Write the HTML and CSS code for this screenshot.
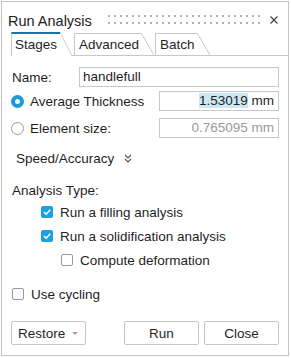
FILE: index.html
```html
<!DOCTYPE html>
<html lang="en">
<head>
    <meta charset="UTF-8">
    <meta name="viewport" content="width=device-width, initial-scale=1.0">
    <title>Run Analysis</title>
    <link rel="stylesheet" href="styles.css">
</head>
<body>
    <div class="dialog">
        <div class="titlebar">
            <span class="title">Run Analysis</span>
            <span class="grip"></span>
            <svg class="close" width="8" height="8" viewBox="0 0 8 8">
                <path d="M0.5 0.5 L7.5 7.5 M7.5 0.5 L0.5 7.5" stroke="#444" stroke-width="1.2" fill="none"/>
            </svg>
        </div>

        <div class="tabs">
            <div class="tab active">Stages</div>
            <div class="tab">Advanced</div>
            <div class="tab">Batch</div>
        </div>

        <div class="panel">
            <div class="row">
                <span>Name:</span>
                <div class="field name-field">handlefull</div>
            </div>

            <div class="row row-avg">
                <span class="radio on"></span>
                <span>Average Thickness</span>
                <div class="field value-field"><span class="sel">1.53019</span> mm</div>
            </div>

            <div class="row row-elem">
                <span class="radio"></span>
                <span>Element size:</span>
                <div class="field value-field muted">0.765095 mm</div>
            </div>

            <div class="row row-speed">
                <span>Speed/Accuracy</span>
                <svg class="chevron" width="8" height="9" viewBox="0 0 8 9">
                    <path d="M1 1 L4 4 L7 1 M1 5 L4 8 L7 5" stroke="#555" stroke-width="1.2" fill="none"/>
                </svg>
            </div>

            <div class="row row-heading">
                <span>Analysis Type:</span>
            </div>

            <div class="row row-first indent-1">
                <span class="check on">
                    <svg width="10" height="10" viewBox="0 0 10 10">
                        <path d="M2 5 L4.2 7.2 L8.2 2.8" stroke="#fff" stroke-width="1.6" fill="none"/>
                    </svg>
                </span>
                <span>Run a filling analysis</span>
            </div>

            <div class="row row-next indent-1">
                <span class="check on">
                    <svg width="10" height="10" viewBox="0 0 10 10">
                        <path d="M2 5 L4.2 7.2 L8.2 2.8" stroke="#fff" stroke-width="1.6" fill="none"/>
                    </svg>
                </span>
                <span>Run a solidification analysis</span>
            </div>

            <div class="row row-next indent-2">
                <span class="check"></span>
                <span>Compute deformation</span>
            </div>

            <div class="row row-cycling">
                <span class="check"></span>
                <span>Use cycling</span>
            </div>

            <div class="actions">
                <button class="btn restore">Restore <span class="caret"></span></button>
                <button class="btn run">Run</button>
                <button class="btn">Close</button>
            </div>
        </div>
    </div>
</body>
</html>
```

FILE: styles.css
```css
body {
    margin: 0;
    font-family: "Liberation Sans", Arial, sans-serif;
    font-size: 13.5px;
    color: #1f1f1f;
    background-color: #fff;
}
.dialog {
    box-sizing: border-box;
    width: 288px;
    height: 355px;
    margin: 1px;
    border: 1px solid #c4c4c4;
    display: flex;
    flex-direction: column;
}
.titlebar {
    display: flex;
    align-items: flex-start;
    padding: 11px 10px 3px 6px;
}
.title {
    font-size: 14.5px;
    line-height: 16px;
    color: #222;
}
.grip {
    width: 152px;
    height: 9px;
    margin: 2px 10px 0 auto;
    background-color: #b0b0b0;
    background-image: linear-gradient(to right, transparent 2px, #fff 2px),
                      linear-gradient(to bottom, transparent 2px, #fff 2px);
    background-size: 6px 7px;
}
.close {
    margin-top: 3px;
}
.tabs {
    display: flex;
    align-items: flex-end;
    height: 23px;
    margin-left: 9px;
    border-bottom: 1px solid #c8c8c8;
}
.tab {
    position: relative;
    height: 21px;
    line-height: 21px;
    padding: 0 2px 0 4px;
    margin-right: 14px;
    border-top: 1px solid #c8c8c8;
    border-left: 1px solid #c8c8c8;
}
.tab::after {
    content: "";
    position: absolute;
    top: -1px;
    bottom: 0;
    left: 100%;
    width: 13px;
    background: linear-gradient(to top right, transparent calc(50% - 0.8px), #c8c8c8 50%, transparent calc(50% + 0.8px));
}
.tab.active {
    height: 22px;
    padding: 0 3px;
    margin-bottom: -1px;
    border-top: 2px solid #17789f;
    background-color: #fff;
}
.tab.active::after {
    top: -2px;
    width: 12px;
    background-color: #fff;
}
.panel {
    flex: 1;
    display: flex;
    flex-direction: column;
    padding: 11px 9px 10px 10px;
}
.row {
    display: flex;
    align-items: center;
    height: 20px;
}
.row-avg {
    margin-top: 4px;
}
.row-elem {
    margin-top: 7px;
}
.row-speed {
    margin-top: 10px;
    padding-left: 4px;
}
.row-heading {
    margin-top: 12px;
}
.row-first {
    margin-top: 2px;
}
.row-next {
    margin-top: 4px;
}
.row-cycling {
    margin-top: 14px;
}
.indent-1 {
    padding-left: 29px;
}
.indent-2 {
    padding-left: 49px;
}
.field {
    box-sizing: border-box;
    height: 20px;
    line-height: 18px;
    padding: 0 3px;
    margin-left: auto;
    border: 1px solid #c8c8c8;
    white-space: nowrap;
}
.name-field {
    width: 200px;
}
.value-field {
    width: 120px;
    text-align: right;
    padding-right: 4px;
}
.sel {
    background-color: #cbe8f6;
}
.muted {
    color: #9a9a9a;
}
.radio {
    box-sizing: border-box;
    width: 13px;
    height: 13px;
    margin: 0 6px 0 -1px;
    border: 1px solid #9a9a9a;
    border-radius: 50%;
    background-color: #fff;
}
.radio.on {
    border: 4px solid #1a9ad6;
}
.chevron {
    margin-left: 10px;
}
.check {
    box-sizing: border-box;
    display: flex;
    align-items: center;
    justify-content: center;
    width: 12px;
    height: 12px;
    margin-right: 7px;
    border: 1px solid #9a9a9a;
    border-radius: 2px;
}
.check.on {
    background-color: #1ba1e2;
    border-color: #1ba1e2;
}
.actions {
    display: flex;
    gap: 5px;
    margin-top: 17px;
}
.btn {
    box-sizing: border-box;
    width: 75px;
    height: 24px;
    padding: 0;
    border: 1px solid #c6c6c6;
    border-radius: 2px;
    background-color: #fff;
    font: inherit;
    color: inherit;
}
.restore {
    display: flex;
    align-items: center;
    justify-content: space-between;
    margin-left: -1px;
    padding: 0 7px 0 6px;
}
.caret {
    border-left: 3px solid transparent;
    border-right: 3px solid transparent;
    border-top: 3px solid #a0a0a0;
}
.run {
    margin-left: auto;
}
```
